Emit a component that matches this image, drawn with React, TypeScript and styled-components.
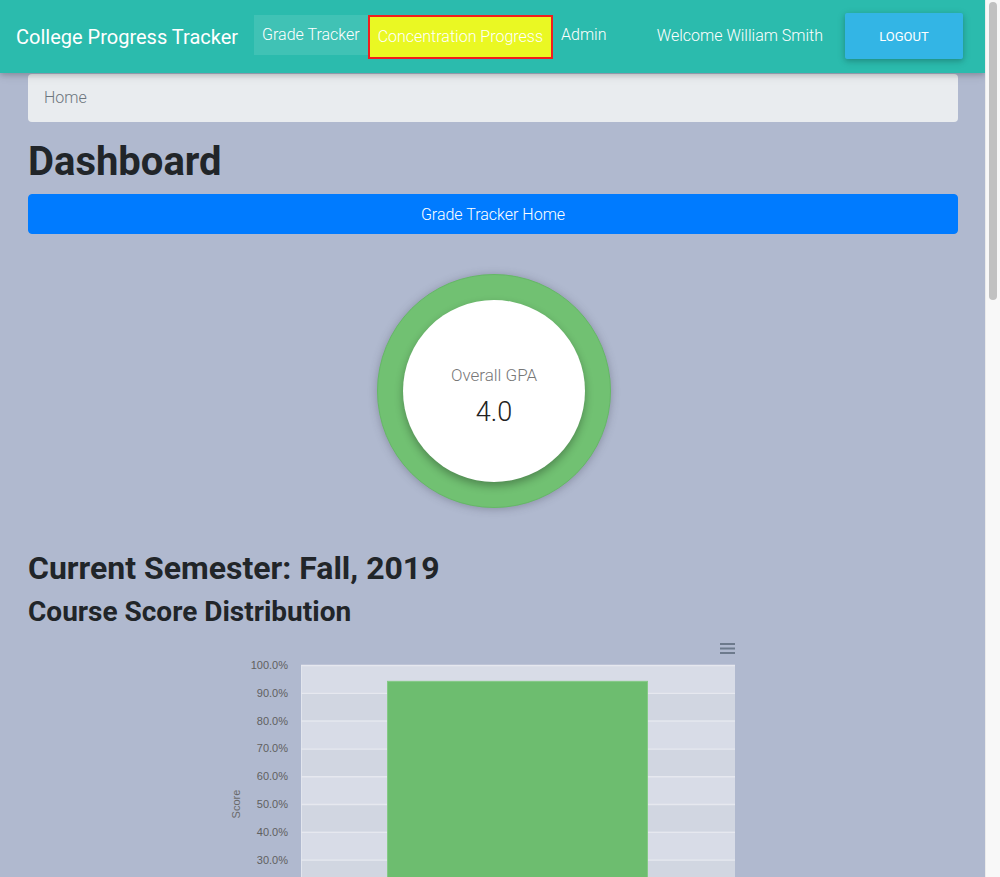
import React from "react";
import styled, { createGlobalStyle } from "styled-components";

const GlobalStyle = createGlobalStyle`
  html, body { margin: 0; padding: 0; }
  body {
    background: #b0b9cf;
    font-family: Roboto, "Noto Sans", "Liberation Sans", sans-serif;
    color: #212529;
  }
  * { box-sizing: border-box; }
`;

const Page = styled.div`
  min-height: 2580px;
  margin-right: 15px;
`;

const ScrollTrack = styled.div`
  position: fixed;
  top: 0;
  right: 0;
  width: 15px;
  height: 100vh;
  background: #f8f8f8;
  border-left: 1px solid #ebebeb;
  z-index: 10;
`;

const ScrollThumb = styled.div`
  position: absolute;
  top: 2px;
  left: 3px;
  width: 8px;
  height: 298px;
  border-radius: 4px;
  background: #c1c1c1;
`;

const NavBar = styled.nav`
  height: 73px;
  background: #2bbbad;
  display: flex;
  align-items: center;
  padding: 0 22px 0 16px;
  box-shadow: 0 2px 5px rgba(0, 0, 0, 0.16), 0 2px 10px rgba(0, 0, 0, 0.12);
  position: relative;
  z-index: 2;
`;

const Brand = styled.div`
  color: #fff;
  font-size: 20px;
  font-weight: 400;
  margin-right: 16px;
  white-space: nowrap;
`;

const NavLinks = styled.div`
  display: flex;
  align-items: flex-start;
  align-self: flex-start;
  margin-top: 15px;
`;

const NavLink = styled.a<{ $active?: boolean; $highlight?: boolean }>`
  display: block;
  color: #fff;
  font-size: 16px;
  font-weight: 300;
  line-height: 40px;
  height: 40px;
  padding: 0 8px;
  white-space: nowrap;
  text-decoration: none;
  background: ${(p) =>
    p.$highlight ? "#eaf823" : p.$active ? "rgba(255,255,255,0.1)" : "transparent"};
  ${(p) =>
    p.$highlight &&
    `
    border: 2px solid #f01e1e;
    height: 44px;
    line-height: 40px;
    padding: 0 8px 0 8px;
  `}
`;

const Spacer = styled.div`
  flex: 1;
`;

const Welcome = styled.div`
  color: #fff;
  font-size: 16px;
  font-weight: 300;
  margin-right: 22px;
  white-space: nowrap;
  margin-bottom: 2px;
`;

const LogoutButton = styled.button`
  width: 118px;
  height: 46px;
  border: none;
  border-radius: 2px;
  background: #33b5e5;
  color: #fff;
  font-family: Roboto, "Liberation Sans", sans-serif;
  font-size: 13px;
  font-weight: 400;
  text-transform: uppercase;
  box-shadow: 0 2px 5px rgba(0, 0, 0, 0.16), 0 2px 10px rgba(0, 0, 0, 0.12);
  margin-bottom: 1px;
`;

const Container = styled.main`
  padding: 1px 27px 0 28px;
`;

const Breadcrumb = styled.div`
  background: #e9ecef;
  border-radius: 4px;
  padding: 12px 16px;
  font-size: 16px;
  font-weight: 300;
  line-height: 24px;
  color: #6c757d;
  margin-bottom: 16px;
`;

const Title = styled.h1`
  margin: 0 0 8px;
  font-size: 40px;
  font-weight: 700;
  line-height: 48px;
`;

const PrimaryButton = styled.button`
  display: block;
  width: 100%;
  height: 40px;
  border: 1px solid #007bff;
  border-radius: 4px;
  background: #007bff;
  color: #fff;
  font-family: Roboto, "Liberation Sans", sans-serif;
  font-size: 16px;
  font-weight: 300;
`;

const GpaWrap = styled.div`
  display: flex;
  justify-content: center;
  margin-top: 40px;
  padding-left: 2px;
`;

const Ring = styled.div`
  width: 234px;
  height: 234px;
  border-radius: 50%;
  background: #71c172;
  border: 1px solid #65b866;
  box-shadow: 0 1px 8px rgba(60, 60, 80, 0.35);
  display: flex;
  align-items: center;
  justify-content: center;
`;

const Inner = styled.div`
  width: 182px;
  height: 182px;
  border-radius: 50%;
  background: #fff;
  box-shadow: 0 4px 8px rgba(0, 0, 0, 0.3);
  display: flex;
  flex-direction: column;
  align-items: center;
  justify-content: center;
  font-family: Roboto, "Liberation Sans", sans-serif;
`;

const GpaLabel = styled.div`
  color: #777;
  font-size: 17px;
  font-weight: 300;
  margin-top: 10px;
`;

const GpaValue = styled.div`
  color: #222;
  font-size: 27px;
  font-weight: 300;
  margin-top: 11px;
`;

const SectionTitle = styled.h2`
  margin: 41px 0 8px;
  font-size: 32px;
  font-weight: 700;
  line-height: 38.4px;
`;

const SubTitle = styled.h3`
  margin: 0;
  font-size: 28px;
  font-weight: 700;
  line-height: 33.6px;
`;

const ChartBox = styled.div`
  margin-top: 1px;
`;

const gridVals = [100, 90, 80, 70, 60, 50, 40, 30, 20, 10, 0];
const PLOT_LEFT = 273;
const PLOT_RIGHT = 707;
const PLOT_TOP = 35;
const STEP = 27.8;

function ScoreChart() {
  const yFor = (v: number) => PLOT_TOP + ((100 - v) / 10) * STEP;
  return (
    <svg width="930" height="420" viewBox="0 0 930 420">
      {gridVals.slice(0, -1).map((v, i) => (
        <rect
          key={"b" + v}
          x={PLOT_LEFT}
          y={yFor(v)}
          width={PLOT_RIGHT - PLOT_LEFT}
          height={STEP}
          fill={i % 2 === 0 ? "#d8dce7" : "#d1d6e1"}
        />
      ))}
      <line x1={PLOT_LEFT + 0.5} y1={PLOT_TOP} x2={PLOT_LEFT + 0.5} y2={yFor(0)} stroke="#e2e5ed" />
      {gridVals.map((v) => (
        <line
          key={"g" + v}
          x1={PLOT_LEFT}
          x2={PLOT_RIGHT}
          y1={yFor(v) + 0.5}
          y2={yFor(v) + 0.5}
          stroke="#e6e8ef"
          strokeWidth="1.5"
        />
      ))}
      {gridVals.map((v) => (
        <text
          key={"t" + v}
          x={260}
          y={yFor(v) + 4}
          textAnchor="end"
          fontFamily="'Liberation Sans', Arial, sans-serif"
          fontSize="11"
          fill="#606060"
        >
          {v.toFixed(1)}%
        </text>
      ))}
      <text
        x={0}
        y={0}
        transform={`translate(212 ${yFor(50)}) rotate(-90)`}
        textAnchor="middle"
        fontFamily="'Liberation Sans', Arial, sans-serif"
        fontSize="11"
        fill="#6a6a6a"
      >
        Score
      </text>
      <rect
        x={359.5}
        y={yFor(94.3) + 0.5}
        width={260}
        height={yFor(0) - yFor(94.3)}
        fill="#6dbd6f"
        stroke="#85c986"
        strokeWidth="1"
      />
      <g stroke="#6d7a8c" strokeWidth="2">
        <line x1={692} x2={707} y1={14} y2={14} />
        <line x1={692} x2={707} y1={18.5} y2={18.5} />
        <line x1={692} x2={707} y1={23} y2={23} />
      </g>
      <text
        x={(PLOT_LEFT + PLOT_RIGHT) / 2}
        y={yFor(0) + 18}
        textAnchor="middle"
        fontFamily="'Liberation Sans', Arial, sans-serif"
        fontSize="11"
        fill="#606060"
      >
        Software Engineering
      </text>
    </svg>
  );
}

export default function App() {
  return (
    <Page>
      <GlobalStyle />
      <NavBar>
        <Brand>College Progress Tracker</Brand>
        <NavLinks>
          <NavLink $active>Grade Tracker</NavLink>
          <NavLink $highlight>Concentration Progress</NavLink>
          <NavLink>Admin</NavLink>
        </NavLinks>
        <Spacer />
        <Welcome>Welcome William Smith</Welcome>
        <LogoutButton>Logout</LogoutButton>
      </NavBar>
      <Container>
        <Breadcrumb>Home</Breadcrumb>
        <Title>Dashboard</Title>
        <PrimaryButton>Grade Tracker Home</PrimaryButton>
        <GpaWrap>
          <Ring>
            <Inner>
              <GpaLabel>Overall GPA</GpaLabel>
              <GpaValue>4.0</GpaValue>
            </Inner>
          </Ring>
        </GpaWrap>
        <SectionTitle>Current Semester: Fall, 2019</SectionTitle>
        <SubTitle>Course Score Distribution</SubTitle>
        <ChartBox>
          <ScoreChart />
        </ChartBox>
      </Container>
      <ScrollTrack>
        <ScrollThumb />
      </ScrollTrack>
    </Page>
  );
}
